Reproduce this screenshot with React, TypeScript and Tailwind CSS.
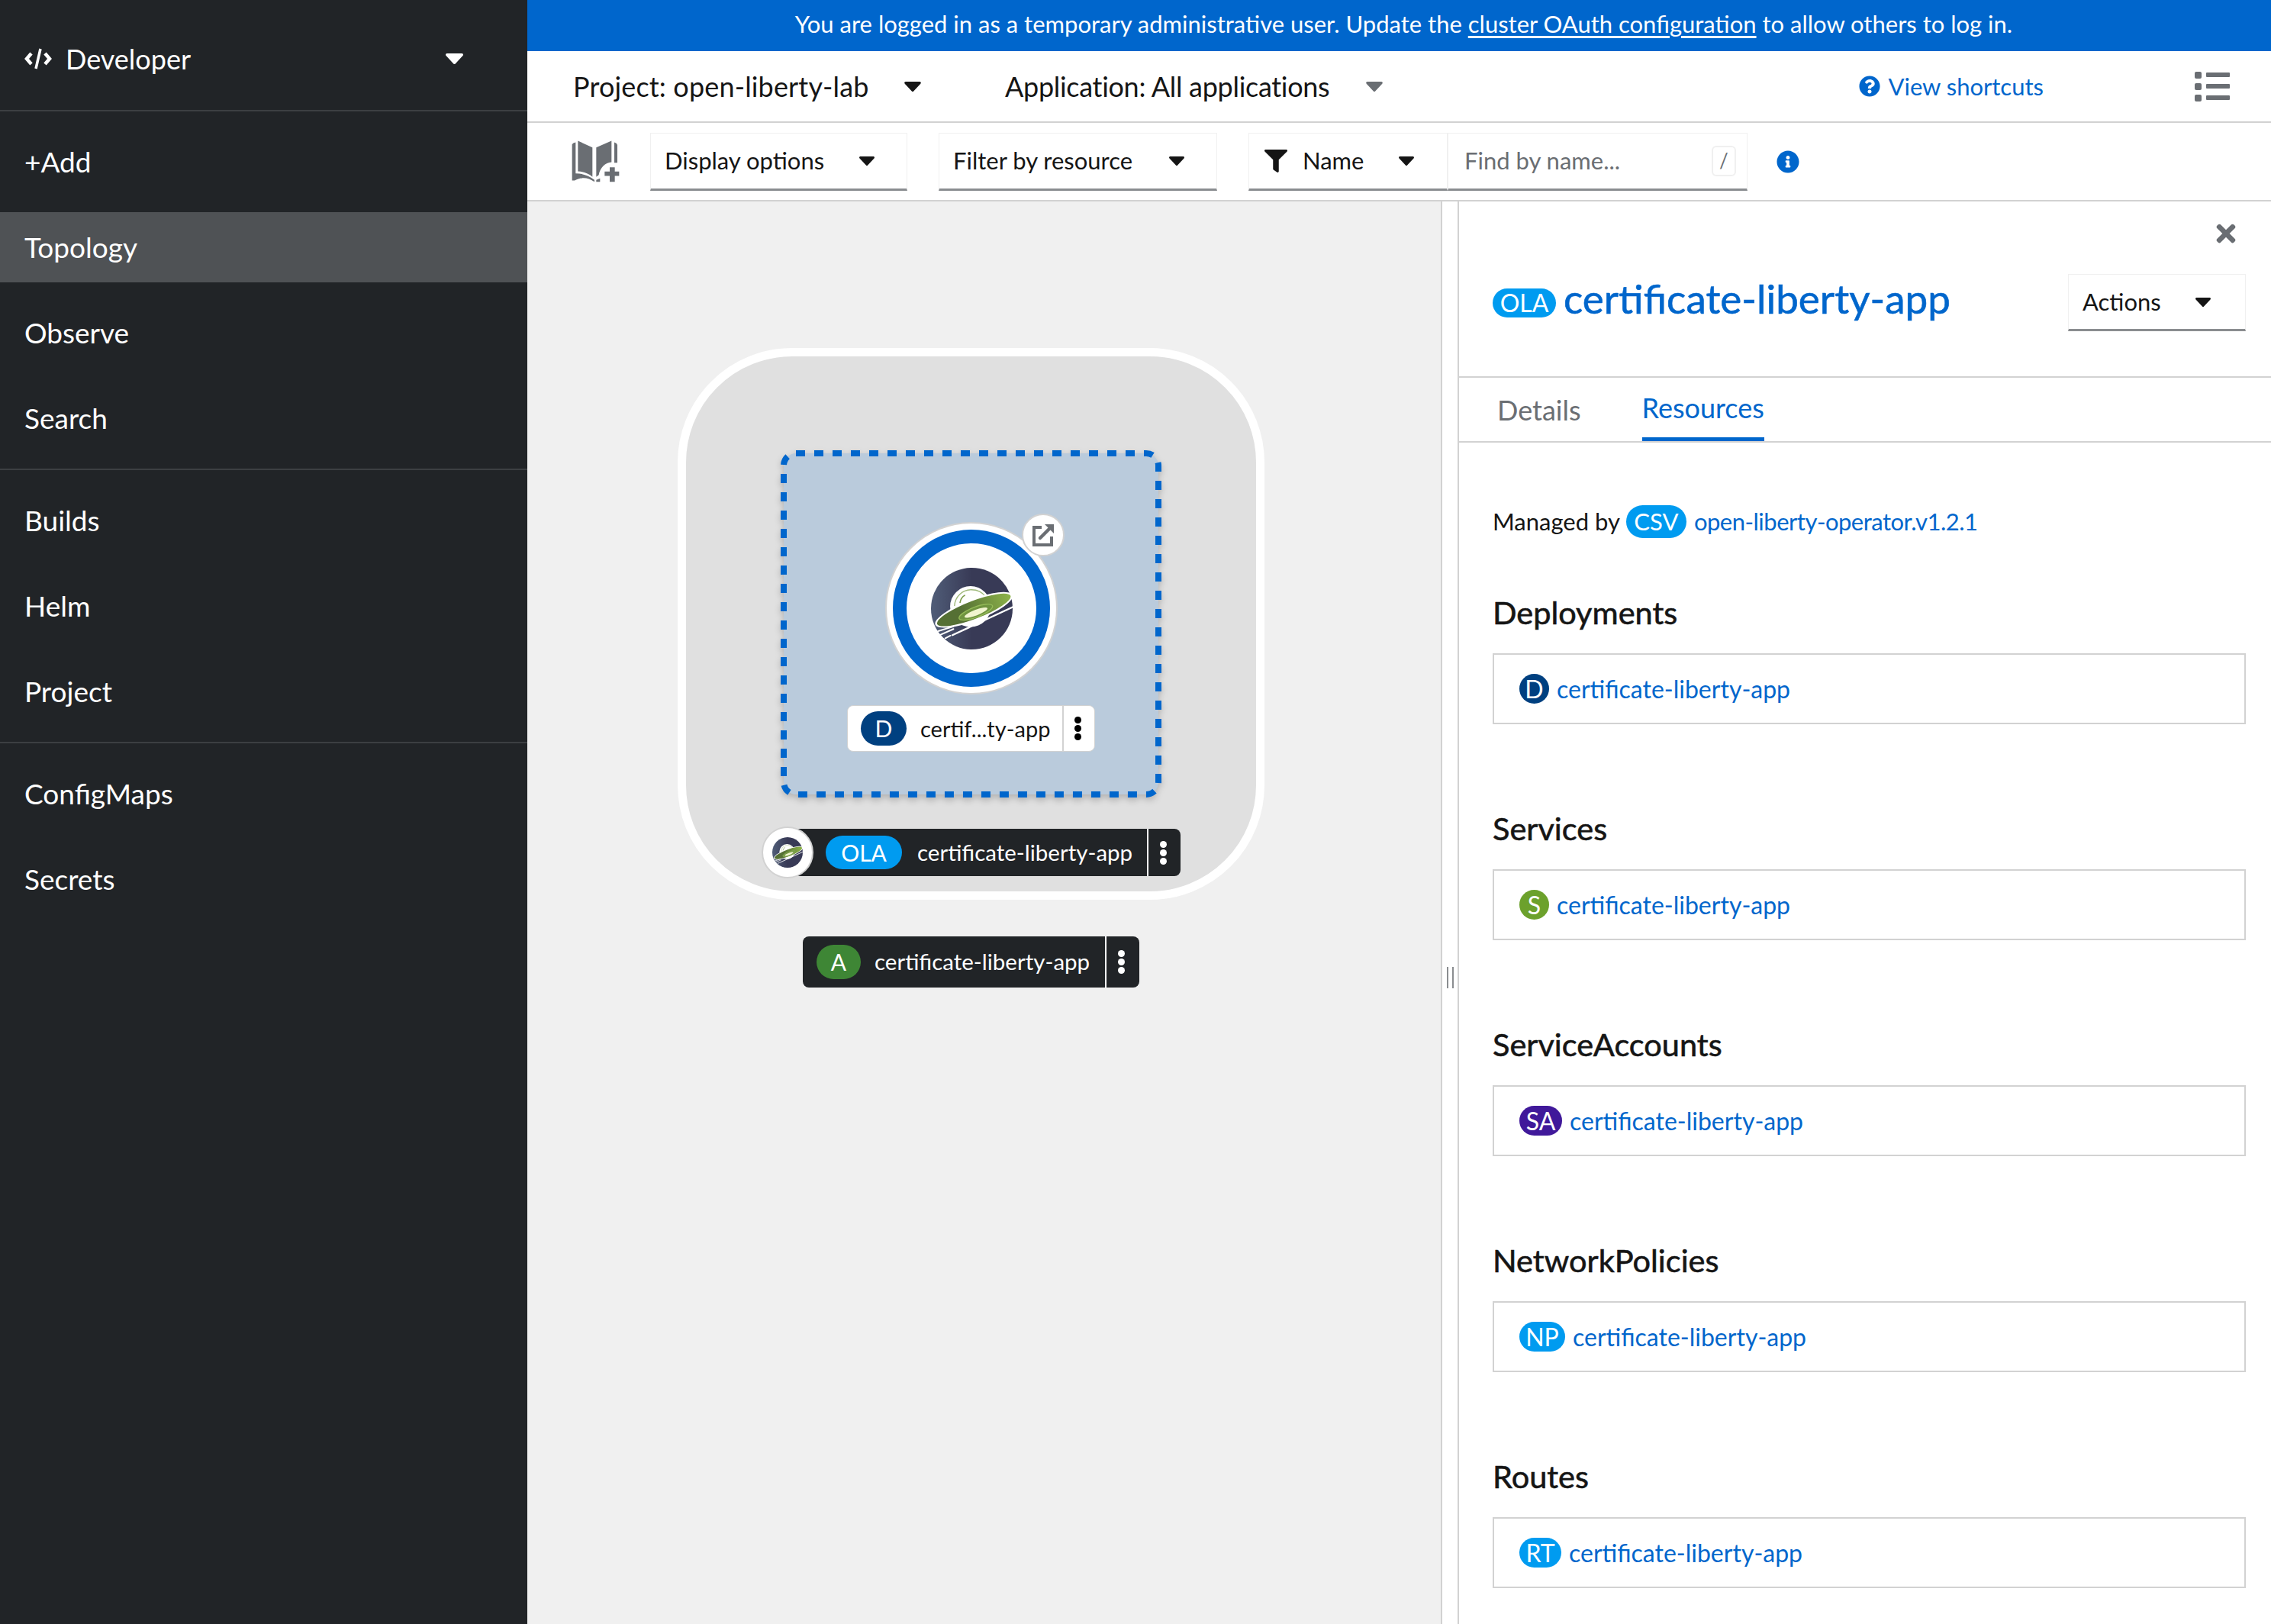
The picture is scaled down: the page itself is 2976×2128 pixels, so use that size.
import { FaFilter, FaInfoCircle, FaQuestionCircle, FaTimes } from "react-icons/fa";

const font = { fontFamily: '"Lato", "Noto Sans", sans-serif' };

function Caret({ className }: { className: string }) {
  return (
    <svg viewBox="0 0 20 12" className={className} fill="currentColor">
      <path d="M1.5 0h17c1.3 0 2 1.6 1 2.6l-8.4 9a1.5 1.5 0 0 1-2.2 0l-8.4-9C-.5 1.6.2 0 1.5 0z" />
    </svg>
  );
}

function Logo({ className }: { className: string }) {
  return (
    <svg viewBox="0 0 320 320" className={className}>
      <defs>
        <linearGradient id="ufoBg" x1="0" x2="1" y1="0" y2="0">
          <stop offset="0" stopColor="#505d78" />
          <stop offset="0.5" stopColor="#383a56" />
        </linearGradient>
        <linearGradient id="ufoDisc" x1="0" x2="1" y1="0" y2="0">
          <stop offset="0.35" stopColor="#557034" />
          <stop offset="1" stopColor="#8db34a" />
        </linearGradient>
      </defs>
      <circle cx="160" cy="160" r="160" fill="url(#ufoBg)" />
      <circle cx="155" cy="152" r="80" fill="#fff" />
      <path d="M92 150c2-38 32-64 66-64 24 0 44 10 56 28" fill="none" stroke="#9fb97a" strokeWidth="4" />
      <path d="M114 136c2-12 8-22 18-28" stroke="#7b9c4b" strokeWidth="5" fill="none" strokeLinecap="round" />
      <g transform="rotate(-21 168 165)">
        <ellipse cx="168" cy="165" rx="162" ry="42" fill="#fff" />
        <ellipse cx="168" cy="165" rx="154" ry="35" fill="url(#ufoDisc)" />
        <ellipse cx="172" cy="176" rx="70" ry="20" fill="#6f9440" stroke="#94ba58" strokeWidth="4" />
        <ellipse cx="172" cy="178" rx="48" ry="11" fill="#f1f5cf" />
      </g>
      <path d="M84 264l236-110" stroke="#fff" strokeWidth="7" strokeLinecap="round" />
      <path d="M28 248l60-18M38 262l50-22M56 276l20-10" stroke="#fff" strokeWidth="6" strokeLinecap="round" />
    </svg>
  );
}

function Kebab({ className }: { className: string }) {
  return (
    <div className={`flex flex-col items-center gap-[2px] ${className}`}>
      <span className="size-[9px] rounded-full bg-current" />
      <span className="size-[9px] rounded-full bg-current" />
      <span className="size-[9px] rounded-full bg-current" />
    </div>
  );
}

function NavItem({ label, active }: { label: string; active?: boolean }) {
  return (
    <div className={`flex h-[92px] items-center pl-[32px] text-[37px] text-white ${active ? "bg-[#4f5255]" : ""}`}>
      {label}
    </div>
  );
}

function NavSection({ items, active }: { items: string[]; active?: string }) {
  return (
    <div className="flex flex-col gap-[20px] border-b-2 border-[#3c3f42] py-[20px]">
      {items.map((it) => (
        <NavItem key={it} label={it} active={it === active} />
      ))}
    </div>
  );
}

function Select({ label, width }: { label: string; width: string }) {
  return (
    <div className={`flex h-[76px] items-center justify-between border border-b-[3px] border-[#f0f0f0] border-b-[#8a8d90] pl-[18px] pr-[42px] text-[31px] text-[#151515] ${width}`}>
      {label}
      <Caret className="h-[12px] w-[20px]" />
    </div>
  );
}

function ResourceCard({ title, badge, color, badgeWidth }: { title: string; badge: string; color: string; badgeWidth: string }) {
  return (
    <div className="mb-[112px]">
      <h2 className="flex h-[50px] items-center text-[41.5px] leading-none text-[#151515] [-webkit-text-stroke:0.6px_#151515]">{title}</h2>
      <div className="mt-[28px] flex h-[93px] items-center border-2 border-[#d2d2d2] pl-[33px]">
        <span className={`mr-[10px] flex h-[39px] items-center justify-center rounded-full text-[32px] text-white ${badgeWidth} ${color}`}>{badge}</span>
        <span className="text-[32px] text-[#06c]">certificate-liberty-app</span>
      </div>
    </div>
  );
}

export default function App() {
  return (
    <div className="flex h-[2128px] w-[2976px] overflow-hidden bg-white" style={font}>
      <aside className="flex w-[691px] shrink-0 flex-col bg-[#212427]">
        <div className="flex h-[146px] items-center justify-between border-b-2 border-[#3c3f42] pl-[32px] pr-[84px] pt-[10px] text-[36px] text-white">
          <div className="flex items-center gap-[18px]">
            <svg viewBox="0 0 36 28" className="h-[28px] w-[36px]" fill="none" stroke="#fff" strokeWidth="4.5">
              <path d="M9 7l-6 7 6 7M27 7l6 7-6 7" />
              <path d="M21 1l-6 26" strokeWidth="3.5" />
            </svg>
            Developer
          </div>
          <Caret className="h-[14px] w-[23px]" />
        </div>
        <NavSection items={["+Add", "Topology", "Observe", "Search"]} active="Topology" />
        <NavSection items={["Builds", "Helm", "Project"]} />
        <div className="flex flex-col gap-[20px] py-[20px]">
          <NavItem label="ConfigMaps" />
          <NavItem label="Secrets" />
        </div>
      </aside>

      <main className="flex min-w-0 flex-1 flex-col">
        <div className="flex h-[67px] items-center justify-center bg-[#06c] pb-[4px] pl-[12px] text-[31px] text-white">
          <span>
            You are logged in as a temporary administrative user. Update the <span className="underline underline-offset-4">cluster OAuth configuration</span> to allow others to log in.
          </span>
        </div>

        <div className="flex h-[94px] items-center border-b-2 border-[#d2d2d2] pl-[60px] pr-[54px] text-[36px] text-[#151515]">
          <span className="w-[388px] whitespace-nowrap tracking-[0.15px]">Project: open-liberty-lab</span>
          <Caret className="ml-[46px] h-[13px] w-[22px]" />
          <span className="ml-[110px] w-[427px] whitespace-nowrap tracking-[-0.3px]">Application: All applications</span>
          <Caret className="ml-[46px] h-[13px] w-[22px] text-[#6a6e73]" />
          <div className="ml-auto flex items-center gap-[10px] text-[31px] text-[#06c]">
            <FaQuestionCircle className="size-[28px]" />
            View shortcuts
          </div>
          <div className="ml-[198px] flex w-[46px] flex-col gap-[6px]">
            {[0, 1, 2].map((i) => (
              <div key={i} className="flex h-[9px] items-center gap-[6px]">
                <span className="size-[9px] rounded-[2px] bg-[#6a6e73]" />
                <span className="h-[6px] flex-1 rounded-[1px] bg-[#6a6e73]" />
              </div>
            ))}
          </div>
        </div>

        <div className="flex h-[103px] items-center gap-[41px] border-b-2 border-[#d2d2d2] pl-[57px]">
          <div className="flex items-center gap-[39px]">
            <svg viewBox="55 40 195 170" className="h-[57px] w-[65px]" fill="#6a6e73">
              <path d="M83 44L140 70V186C125 172 105 165 83 164Z" />
              <path d="M155 70L215 44V128C190 130 170 150 165 178L155 186Z" />
              <path d="M60 58Q63 52 74 50V172C100 172 125 180 148 198V205C125 188 95 184 70 200H60Z" />
              <path d="M226 50Q236 52 238 60V130H226Z" />
              <path d="M208 148H228V165H245V182H228V205H208V182H188V165H208Z" />
              <path d="M155 198L170 192V205H155Z" />
            </svg>
            <Select label="Display options" width="w-[337px]" />
          </div>
          <Select label="Filter by resource" width="w-[365px]" />
          <div className="flex items-center">
            <div className="flex h-[76px] w-[261px] items-center border border-b-[3px] border-[#f0f0f0] border-b-[#8a8d90] pl-[20px] text-[31px] text-[#151515]">
              <FaFilter className="size-[30px]" />
              <span className="ml-[20px]">Name</span>
              <Caret className="ml-[46px] h-[12px] w-[20px]" />
            </div>
            <div className="flex h-[76px] w-[393px] items-center justify-between border border-b-[3px] border-[#f0f0f0] border-b-[#8a8d90] pl-[21px] pr-[14px] text-[31px] text-[#6a6e73]">
              Find by name...
              <span className="flex h-[40px] w-[32px] items-center justify-center rounded-[6px] border-2 border-[#f0f0f0] text-[26px]">/</span>
            </div>
          </div>
          <FaInfoCircle className="-ml-[3px] size-[30px] text-[#06c]" />
        </div>

        <div className="flex min-h-0 flex-1">
          <div className="relative w-[1197px] shrink-0 bg-[#f0f0f0]">
            <div className="absolute left-[197px] top-[192px] h-[723px] w-[769px] rounded-[150px] border-[11px] border-white bg-[#e0e0e0]" />

            <svg className="absolute left-[332px] top-[326px] h-[455px] w-[499px] drop-shadow-[0_4px_4px_rgba(0,0,0,0.2)]" viewBox="0 0 499 455">
              <rect x="4" y="4" width="491" height="447" rx="16" fill="#bacbdc" stroke="#06c" strokeWidth="8" strokeDasharray="12 12" />
            </svg>

            <div className="absolute left-[469px] top-[420px] flex size-[226px] items-center justify-center rounded-full border-2 border-[#d2d2d2] bg-white">
              <div className="flex size-[206px] items-center justify-center rounded-full border-[18px] border-[#06c] bg-white">
                <Logo className="size-[107px]" />
              </div>
            </div>

            <div className="absolute left-[648px] top-[409px] flex size-[56px] items-center justify-center rounded-full border-2 border-[#d2d2d2] bg-white">
              <svg viewBox="0 0 30 30" className="size-[30px]" fill="none" stroke="#6a6e73" strokeWidth="4">
                <path d="M13 5H3v23h23V17" />
                <path d="M11 19L26 4" strokeWidth="4.5" strokeLinecap="round" />
                <path d="M17 1h12v12z" fill="#6a6e73" stroke="none" />
              </svg>
            </div>

            <div className="absolute left-[419px] top-[660px] flex h-[61px] w-[325px] items-center rounded-[8px] border border-[#d2d2d2] bg-white text-[29px] text-[#151515]">
              <span className="ml-[17px] flex h-[45px] w-[60px] items-center justify-center rounded-full bg-[#004080] text-[30px] text-white">D</span>
              <span className="ml-[18px] w-[186px]">certif...ty-app</span>
              <div className="flex h-full flex-1 items-center justify-center border-l-2 border-[#d2d2d2] pr-[4px]">
                <Kebab className="text-black" />
              </div>
            </div>

            <div className="absolute left-[353px] top-[822px] flex h-[62px] w-[503px] items-center rounded-r-[8px] bg-[#212427] text-[29.5px] text-white">
              <span className="ml-[38px] flex h-[44px] w-[100px] items-center justify-center rounded-full bg-[#009bf0] text-[30px]">OLA</span>
              <span className="ml-[20px] w-[301px]">certificate-liberty-app</span>
              <div className="flex h-full flex-1 items-center justify-center border-l-2 border-white pr-[4px]">
                <Kebab className="text-white" />
              </div>
            </div>
            <div className="absolute left-[307px] top-[819px] flex size-[68px] items-center justify-center rounded-full border-2 border-[#d2d2d2] bg-white">
              <Logo className="size-[40px]" />
            </div>

            <div className="absolute left-[361px] top-[963px] flex h-[67px] w-[441px] items-center rounded-[8px] bg-[#212427] text-[29.5px] text-white">
              <span className="ml-[18px] flex h-[45px] w-[58px] items-center justify-center rounded-full bg-[#3e8635] text-[30px]">A</span>
              <span className="ml-[18px] w-[302px]">certificate-liberty-app</span>
              <div className="flex h-full flex-1 items-center justify-center border-l-2 border-white pr-[4px]">
                <Kebab className="text-white" />
              </div>
            </div>
          </div>

          <div className="flex w-[22px] shrink-0 items-start justify-center border-l-2 border-[#d2d2d2] bg-white pt-[1003px]">
            <div className="h-[28px] w-[9px] border-x-2 border-[#8a8d90]" />
          </div>

          <div className="flex min-w-0 flex-1 flex-col border-l-2 border-[#d2d2d2]">
            <div className="relative h-[231px] shrink-0 border-b-2 border-[#d2d2d2]">
              <FaTimes className="absolute right-[41px] top-[24px] size-[36px] text-[#6a6e73]" />
              <div className="mt-[95px] flex h-[75px] items-center pl-[44px] pr-[33px]">
                <span className="flex h-[38px] w-[83px] items-center justify-center rounded-full bg-[#009bf0] text-[32px] text-white">OLA</span>
                <span className="mb-[12px] ml-[10px] text-[53px] leading-none text-[#06c] [-webkit-text-stroke:0.6px_#06c]">certificate-liberty-app</span>
                <div className="ml-auto flex h-[75px] w-[233px] items-center justify-between border border-b-[3px] border-[#f0f0f0] border-b-[#8a8d90] pl-[18px] pr-[45px] text-[31px] text-[#151515]">
                  Actions
                  <Caret className="h-[12px] w-[20px]" />
                </div>
              </div>
            </div>
            <div className="flex h-[85px] shrink-0 items-end gap-[80px] border-b-2 border-[#d2d2d2] pl-[50px] text-[36px]">
              <div className="flex h-full items-center text-[#6a6e73]">Details</div>
              <div className="flex h-full items-center border-b-[5px] border-[#06c] text-[#06c]">Resources</div>
            </div>
            <div className="px-[33px] pl-[44px] pt-[82px]">
              <div className="flex h-[43px] items-center text-[31px] text-[#151515]">
                Managed by
                <span className="ml-[8px] flex h-[43px] w-[79px] items-center justify-center rounded-full bg-[#009bf0] text-white">CSV</span>
                <span className="ml-[10px] tracking-[-0.5px] text-[#06c]">open-liberty-operator.v1.2.1</span>
              </div>
              <div className="mt-[73px]">
                <ResourceCard title="Deployments" badge="D" color="bg-[#004080]" badgeWidth="w-[39px]" />
                <ResourceCard title="Services" badge="S" color="bg-[#6ca12c]" badgeWidth="w-[39px]" />
                <ResourceCard title="ServiceAccounts" badge="SA" color="bg-[#40199a]" badgeWidth="w-[56px]" />
                <ResourceCard title="NetworkPolicies" badge="NP" color="bg-[#009bf0]" badgeWidth="w-[60px]" />
                <ResourceCard title="Routes" badge="RT" color="bg-[#009bf0]" badgeWidth="w-[55px]" />
              </div>
            </div>
          </div>
        </div>
      </main>
    </div>
  );
}
